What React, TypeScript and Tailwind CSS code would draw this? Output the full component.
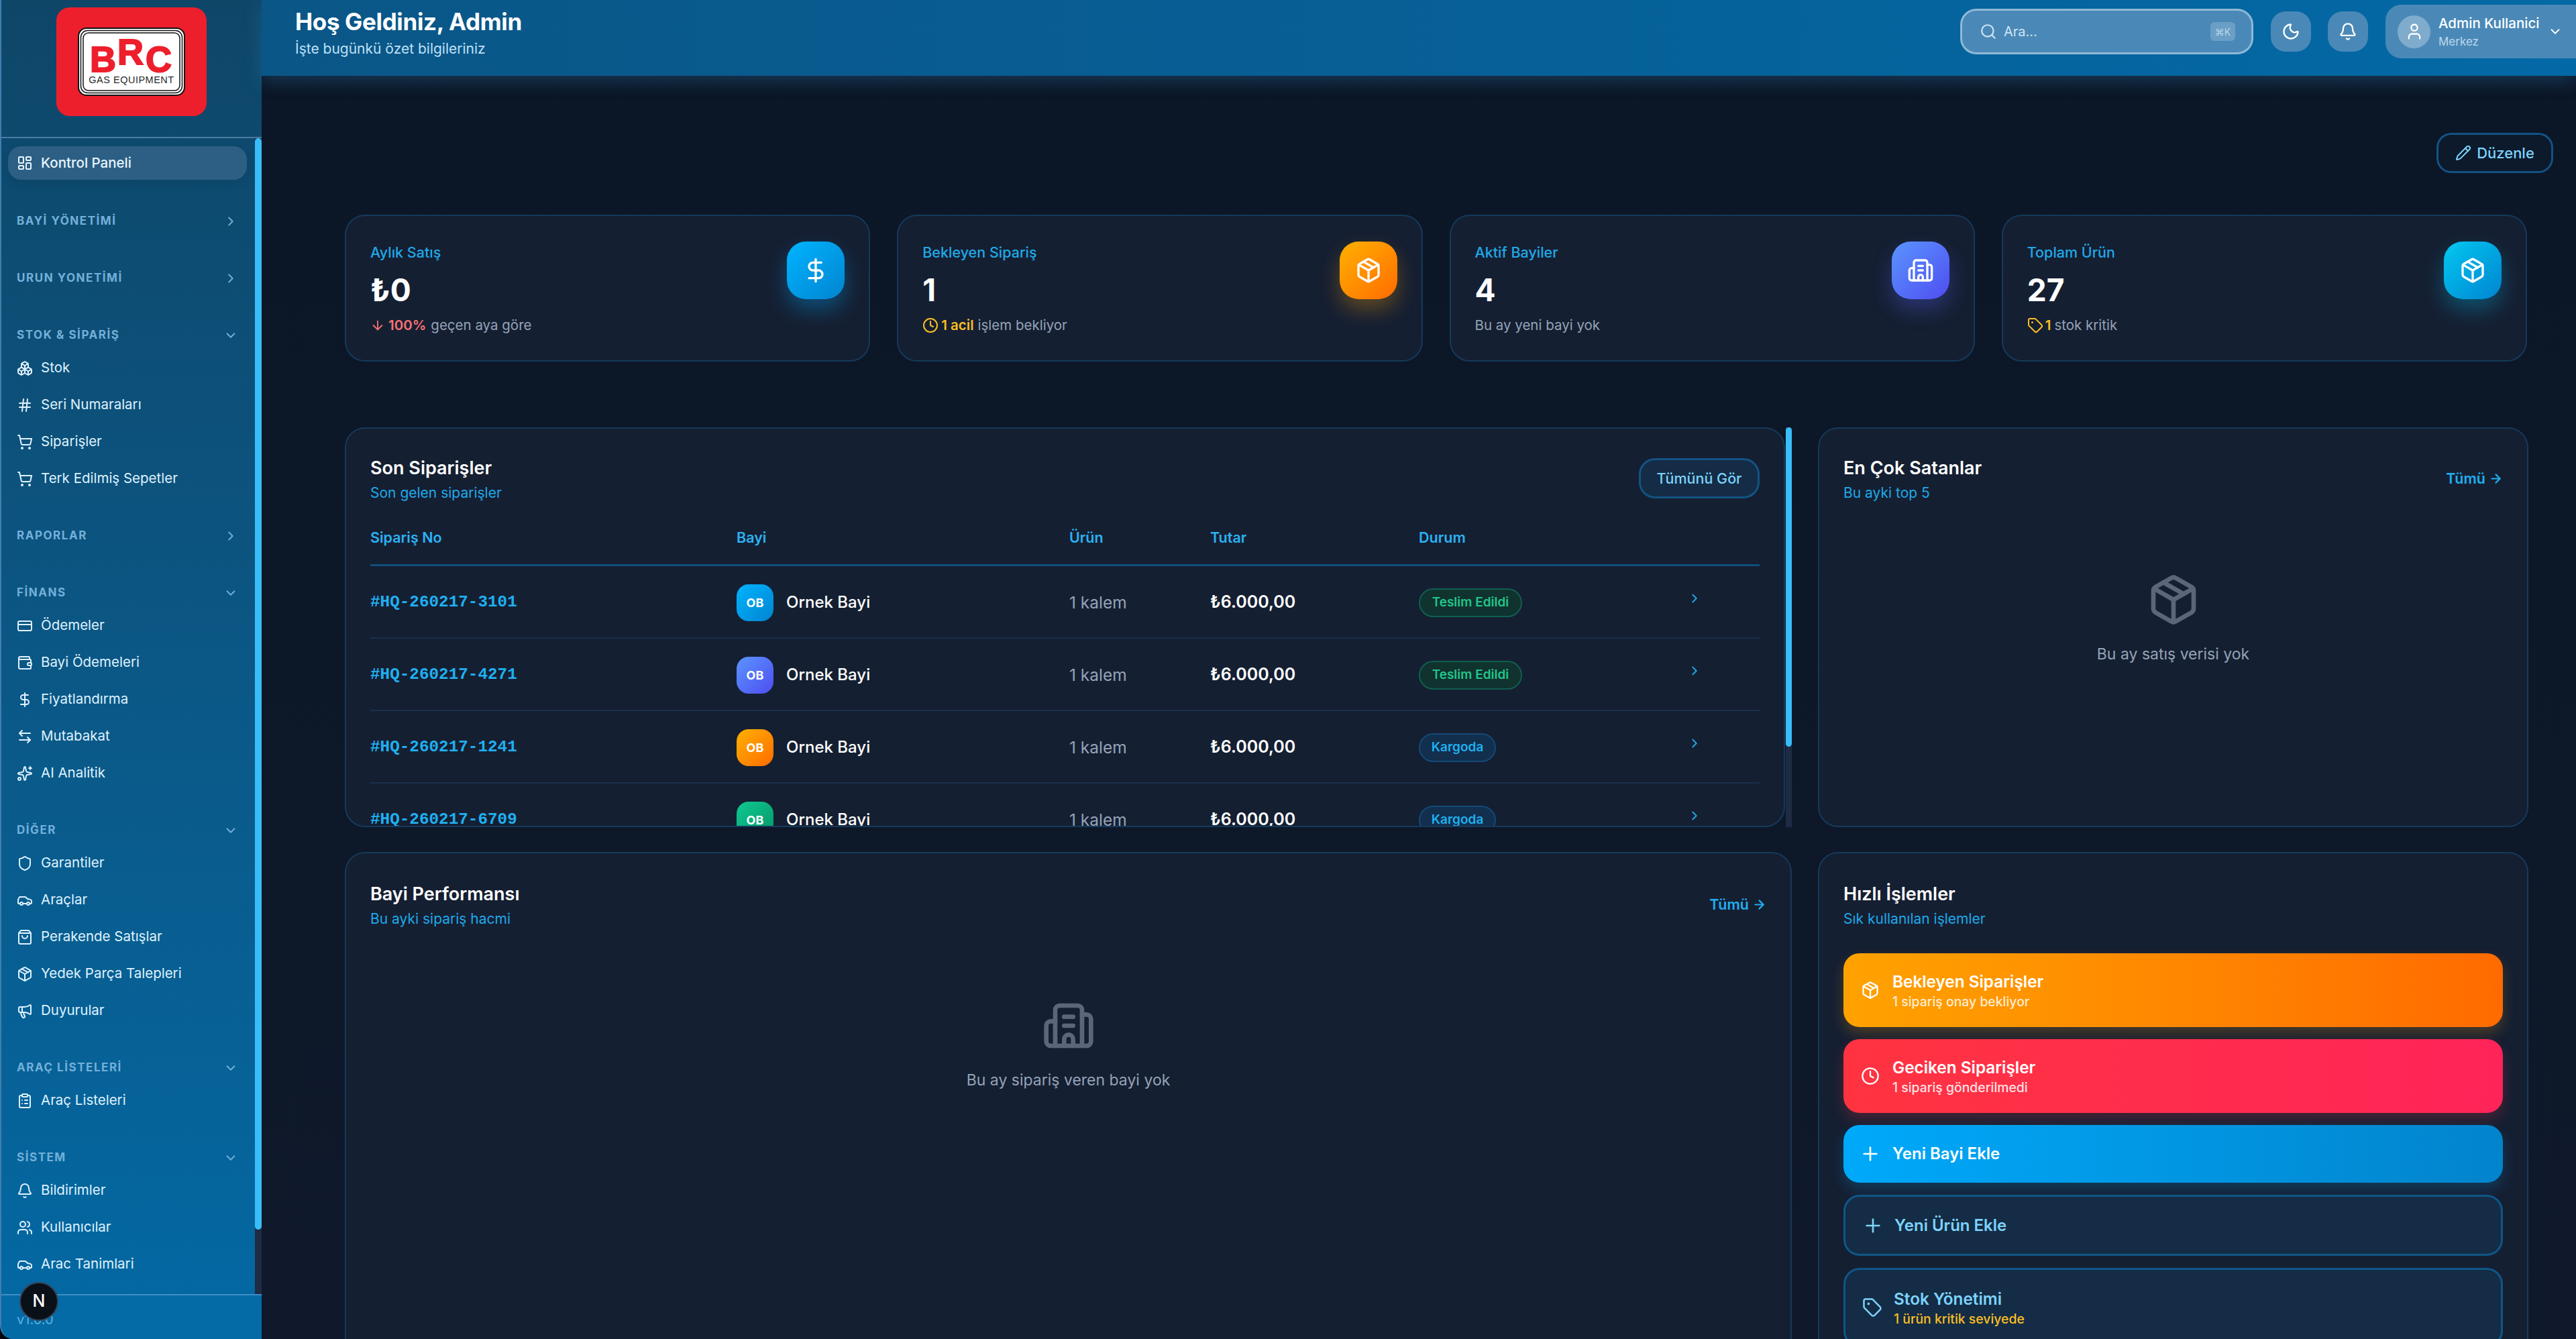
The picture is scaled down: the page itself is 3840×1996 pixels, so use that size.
import React from "react";
import {
  LayoutDashboard, Boxes, Hash, ShoppingCart, CreditCard, Wallet, DollarSign, ArrowLeftRight, Sparkles,
  Shield, Car, ShoppingBag, Package, Megaphone, ClipboardList, Bell, Users, ChevronRight, ChevronDown,
  Search, Moon, User, Pencil, Building2, Tag, Clock, ArrowDown, ArrowRight, Plus, Settings,
} from "lucide-react";

type Item = { label: string; icon: React.ElementType };
type Section = { title: string; open: boolean; items: Item[] };

const sections: Section[] = [
  { title: "BAYİ YÖNETİMİ", open: false, items: [] },
  { title: "URUN YONETİMİ", open: false, items: [] },
  {
    title: "STOK & SİPARİŞ", open: true,
    items: [
      { label: "Stok", icon: Boxes },
      { label: "Seri Numaraları", icon: Hash },
      { label: "Siparişler", icon: ShoppingCart },
      { label: "Terk Edilmiş Sepetler", icon: ShoppingCart },
    ],
  },
  { title: "RAPORLAR", open: false, items: [] },
  {
    title: "FİNANS", open: true,
    items: [
      { label: "Ödemeler", icon: CreditCard },
      { label: "Bayi Ödemeleri", icon: Wallet },
      { label: "Fiyatlandırma", icon: DollarSign },
      { label: "Mutabakat", icon: ArrowLeftRight },
      { label: "AI Analitik", icon: Sparkles },
    ],
  },
  {
    title: "DİĞER", open: true,
    items: [
      { label: "Garantiler", icon: Shield },
      { label: "Araçlar", icon: Car },
      { label: "Perakende Satışlar", icon: ShoppingBag },
      { label: "Yedek Parça Talepleri", icon: Package },
      { label: "Duyurular", icon: Megaphone },
    ],
  },
  { title: "ARAÇ LİSTELERİ", open: true, items: [{ label: "Araç Listeleri", icon: ClipboardList }] },
  {
    title: "SİSTEM", open: true,
    items: [
      { label: "Bildirimler", icon: Bell },
      { label: "Kullanıcılar", icon: Users },
      { label: "Arac Tanimlari", icon: Car },
      { label: "Ayarlar", icon: Settings },
    ],
  },
];

function Logo() {
  return (
    <div className="mx-auto mt-[11px] flex h-[162px] w-[224px] items-center justify-center rounded-[20px] bg-[#ee1f2d]">
      <svg width="160" height="102" viewBox="0 0 160 102">
        <rect x="1" y="1" width="158" height="100" rx="12" fill="#fff" stroke="#111" strokeWidth="2" />
        <rect x="4.5" y="4.5" width="151" height="93" rx="10" fill="#fff" stroke="#111" strokeWidth="1.5" />
        <rect x="8" y="8" width="144" height="86" rx="8" fill="#fff" stroke="#111" strokeWidth="1.5" />
        <text x="18" y="66" fontFamily="'Liberation Sans', sans-serif" fontWeight="700" fontSize="54" fill="#ee1f2d" stroke="#ee1f2d" strokeWidth="2">B</text>
        <text x="59" y="55" fontFamily="'Liberation Sans', sans-serif" fontWeight="700" fontSize="54" fill="#ee1f2d" stroke="#ee1f2d" strokeWidth="2">R</text>
        <text x="101" y="66" fontFamily="'Liberation Sans', sans-serif" fontWeight="700" fontSize="54" fill="#ee1f2d" stroke="#ee1f2d" strokeWidth="2">C</text>
        <text x="80" y="83" textAnchor="middle" fontFamily="'Liberation Sans', sans-serif" fontSize="14.5" letterSpacing="0.5" fill="#2a2a2a">GAS EQUIPMENT</text>
      </svg>
    </div>
  );
}

function Sidebar() {
  return (
    <aside className="relative flex h-full w-[390px] shrink-0 flex-col overflow-hidden rounded-bl-[20px] border-l-2 border-[#3f7fae] bg-gradient-to-b from-[#0e4668] to-[#0369a4]">
      <div className="h-[206px] shrink-0 border-b-2 border-[#4a7c9f]">
        <Logo />
      </div>
      <div className="flex min-h-0 flex-1">
        <nav className="min-w-0 flex-1 overflow-hidden pl-[10px] pr-[12px] pt-[12px]">
          <div className="flex h-[50px] items-center gap-[12px] rounded-[20px] bg-[#2d5f84] pl-[13px] text-[20.5px] font-medium text-[#e6f5ff] shadow-[0_6px_14px_rgba(0,0,0,0.08)]">
            <LayoutDashboard size={24} strokeWidth={2} className="shrink-0" />
            <span>Kontrol Paneli</span>
          </div>
          <div className="mt-[40px]">
            {sections.map((s) => (
              <div key={s.title} className={s.open ? "mb-[36px]" : "mb-[42px]"}>
                <div className="flex h-[43px] items-center justify-between pl-[13px] pr-[13px] text-[17px] font-bold tracking-[0.09em] text-[#74b0da]">
                  <span>{s.title}</span>
                  {s.open ? <ChevronDown size={22} strokeWidth={2} /> : <ChevronRight size={22} strokeWidth={2} />}
                </div>
                {s.items.map((it) => (
                  <div key={it.label} className="flex h-[55px] items-center gap-[12px] pl-[13px] text-[20.5px] text-[#dff2ff]">
                    <it.icon size={24} strokeWidth={2} className="shrink-0" />
                    <span className="whitespace-nowrap">{it.label}</span>
                  </div>
                ))}
              </div>
            ))}
          </div>
        </nav>
        <div className="h-full w-[10px] shrink-0 bg-[#1e2b42]">
          <div className="h-[1627px] w-full rounded-full bg-[#38bdf8]" />
        </div>
      </div>
      <div className="h-[67px] shrink-0 border-t-2 border-[#3e8fc4] bg-[#046ba6] pl-[23px] pt-[24px] text-[20px] leading-[24px] text-[#5db0e2]">
        v1.0.0
      </div>
      <div className="absolute left-[27px] top-[1911px] flex h-[58px] w-[58px] items-center justify-center rounded-full border-2 border-[#33445a] bg-[#0a1018] text-[25px] font-medium text-white">
        N
      </div>
    </aside>
  );
}

function Topbar() {
  return (
    <header className="relative z-10 flex h-[113px] shrink-0 bg-gradient-to-r from-[#0a5687] to-[#0369a6] shadow-[0_8px_26px_rgba(56,140,200,0.3)]">
      <div className="pl-[50px] pt-[11px]">
        <h1 className="text-[35px] font-bold leading-[42px] tracking-[-0.01em] text-white">Hoş Geldiniz, Admin</h1>
        <p className="mt-[6px] text-[21px] leading-[28px] text-[#bfe0f5]">İşte bugünkü özet bilgileriniz</p>
      </div>
      <div className="ml-auto flex h-[94px] items-center">
        <div className="flex h-[68px] w-[437px] items-center rounded-[24px] border-[3px] border-[#8fb8d6] bg-[#4a89b7] pl-[26px] pr-[24px] text-[20px] text-[#cfe4f3]">
          <Search size={26} strokeWidth={2} className="shrink-0" />
          <span className="ml-[10px]">Ara...</span>
          <span className="ml-auto flex h-[28px] w-[37px] items-center justify-center rounded-[6px] bg-[#6b9fc6] text-[14px] text-[#b9d6ea]">⌘K</span>
        </div>
        <div className="ml-[26px] flex h-[60px] w-[60px] items-center justify-center rounded-[22px] bg-[#4a89b7] text-white">
          <Moon size={28} strokeWidth={2} />
        </div>
        <div className="ml-[25px] flex h-[60px] w-[60px] items-center justify-center rounded-[22px] bg-[#4a89b7] text-white">
          <Bell size={28} strokeWidth={2} />
        </div>
        <div className="ml-[26px] flex h-[80px] w-[284px] items-center rounded-l-[24px] bg-[#4a89b7] pl-[18px]">
          <div className="flex h-[49px] w-[49px] items-center justify-center rounded-full bg-[#7fabcc] text-white">
            <User size={28} strokeWidth={2} />
          </div>
          <div className="ml-[12px]">
            <div className="text-[20.5px] font-medium leading-[28px] text-white">Admin Kullanici</div>
            <div className="mt-[1px] text-[17px] leading-[24px] text-[#bcd8ec]">Merkez</div>
          </div>
          <ChevronDown size={22} strokeWidth={2} className="ml-[13px] text-white" />
        </div>
      </div>
    </header>
  );
}

const stats = [
  { label: "Aylık Satış", value: "₺0", icon: DollarSign, grad: "bg-gradient-to-br from-[#00b4ff] to-[#0284d0] shadow-[0_16px_30px_rgba(0,160,240,0.35)]", kind: "a" },
  { label: "Bekleyen Sipariş", value: "1", icon: Package, grad: "bg-gradient-to-br from-[#ffb000] to-[#ff6a00] shadow-[0_16px_30px_rgba(255,160,0,0.3)]", kind: "b" },
  { label: "Aktif Bayiler", value: "4", icon: Building2, grad: "bg-gradient-to-br from-[#5b93ff] to-[#4f4bf0] shadow-[0_16px_30px_rgba(90,100,255,0.3)]", kind: "c" },
  { label: "Toplam Ürün", value: "27", icon: Package, grad: "bg-gradient-to-br from-[#08c8f0] to-[#0284d0] shadow-[0_16px_30px_rgba(0,190,240,0.3)]", kind: "d" },
];

function StatSub({ kind }: { kind: string }) {
  if (kind === "a")
    return (
      <>
        <ArrowDown size={22} strokeWidth={2} className="text-[#f87171]" />
        <span className="ml-[5px] font-semibold text-[#f87171]">100%</span>
        <span className="ml-[7px]">geçen aya göre</span>
      </>
    );
  if (kind === "b")
    return (
      <>
        <Clock size={24} strokeWidth={2} className="text-[#fbbf24]" />
        <span className="ml-[4px] font-semibold text-[#fbbf24]">1 acil</span>
        <span className="ml-[6px]">işlem bekliyor</span>
      </>
    );
  if (kind === "c") return <span>Bu ay yeni bayi yok</span>;
  return (
    <>
      <Tag size={24} strokeWidth={2} className="text-[#fbbf24]" />
      <span className="ml-[3px] font-semibold text-[#fbbf24]">1</span>
      <span className="ml-[5px]">stok kritik</span>
    </>
  );
}

const cardCls = "rounded-[30px] border-2 border-[#153a5a] bg-[#151f32]";

function StatCards() {
  return (
    <div className="mt-[62px] ml-[124px] mr-[73px] grid grid-cols-4 gap-[40px]">
      {stats.map((s) => (
        <div key={s.label} className={`${cardCls} flex h-[219px] justify-between pl-[36px] pr-[36px] pt-[36px]`}>
          <div>
            <div className="text-[21.5px] font-medium leading-[36px] text-[#1fa9e8]">{s.label}</div>
            <div className="mt-[12px] text-[46px] font-bold leading-[52px] text-white">{s.value}</div>
            <div className="mt-[11px] flex h-[32px] items-center text-[20.5px] text-[#94a3b8]">
              <StatSub kind={s.kind} />
            </div>
          </div>
          <div className={`${s.grad} mt-[2px] flex h-[86px] w-[86px] items-center justify-center rounded-[28px] text-white`}>
            <s.icon size={40} strokeWidth={2} />
          </div>
        </div>
      ))}
    </div>
  );
}

const orders = [
  { no: "#HQ-260217-3101", grad: "bg-gradient-to-br from-[#00b4ff] to-[#0284d0]", status: "Teslim Edildi" },
  { no: "#HQ-260217-4271", grad: "bg-gradient-to-br from-[#5b93ff] to-[#4f4bf0]", status: "Teslim Edildi" },
  { no: "#HQ-260217-1241", grad: "bg-gradient-to-br from-[#ffb000] to-[#ff6a00]", status: "Kargoda" },
  { no: "#HQ-260217-6709", grad: "bg-gradient-to-br from-[#10c990] to-[#059669]", status: "Kargoda" },
];

const tableCols = "grid grid-cols-[546px_496px_210px_311px_1fr]";

function CardHead({ title, sub, action }: { title: string; sub: string; action?: React.ReactNode }) {
  return (
    <div className="flex items-start justify-between">
      <div>
        <h2 className="text-[27px] font-semibold leading-[34px] text-white">{title}</h2>
        <p className="mt-[5px] text-[21px] leading-[30px] text-[#1fa9e8]">{sub}</p>
      </div>
      {action}
    </div>
  );
}

function TumuLink() {
  return (
    <div className="mt-[16px] flex h-[32px] items-center gap-[5px] text-[21.5px] font-semibold text-[#1fb0f0]">
      Tümü <ArrowRight size={21} strokeWidth={2.5} />
    </div>
  );
}

function OrdersCard() {
  return (
    <div className="flex h-[596px] min-w-0">
      <div className={`${cardCls} min-w-0 flex-1 overflow-hidden px-[36px] pt-[42px]`}>
        <div>
          <CardHead
            title="Son Siparişler"
            sub="Son gelen siparişler"
            action={
              <div className="mt-[2px] flex h-[60px] w-[180px] items-center justify-center rounded-[24px] border-[3px] border-[#135383] bg-[#142c45] text-[21.5px] font-medium text-[#7dd3fc]">
                Tümünü Gör
              </div>
            }
          />
          <div className={`${tableCols} mt-[12px] h-[82px] items-center border-b-[3px] border-[#0f4f7c] text-[21.5px] font-semibold text-[#2bb2f2]`}>
            <span>Sipariş No</span>
            <span>Bayi</span>
            <span>Ürün</span>
            <span>Tutar</span>
            <span>Durum</span>
          </div>
          {orders.map((o) => (
            <div key={o.no} className={`${tableCols} h-[108px] items-center border-b-2 border-[#17314c] pt-[2px]`}>
              <span className="font-['Liberation_Mono',monospace] text-[24.3px] font-bold text-[#1fb0f0]">{o.no}</span>
              <div className="flex items-center gap-[19px]">
                <div className={`${o.grad} flex h-[55px] w-[55px] items-center justify-center rounded-[18px] text-[18px] font-bold text-white`}>OB</div>
                <span className="text-[24px] font-medium text-white">Ornek Bayi</span>
              </div>
              <span className="text-[24.5px] text-[#94a3b8]">1 kalem</span>
              <span className="text-[25px] font-semibold text-white">₺6.000,00</span>
              <div className="flex items-center">
                {o.status === "Teslim Edildi" ? (
                  <span className="flex h-[43px] w-[154px] items-center justify-center rounded-full border-2 border-[#115e50] bg-[#10332f] text-[19px] font-semibold text-[#22c58b]">
                    Teslim Edildi
                  </span>
                ) : (
                  <span className="flex h-[43px] w-[115px] items-center justify-center rounded-full border-2 border-[#124a78] bg-[#122f4d] text-[19px] font-semibold text-[#1fb0f0]">
                    Kargoda
                  </span>
                )}
                <ChevronRight size={22} strokeWidth={2} className="mb-[12px] ml-auto mr-[86px] text-[#1fa9e8]" />
              </div>
            </div>
          ))}
        </div>
      </div>
      <div className="ml-px h-full w-[9px] shrink-0 bg-[#1e2b42]">
        <div className="h-[476px] w-full rounded-full bg-[#38bdf8]" />
      </div>
    </div>
  );
}

function Empty({ icon: Icon, text }: { icon: React.ElementType; text: string }) {
  return (
    <div className="flex flex-col items-center pt-[104px]">
      <Icon size={80} strokeWidth={2} className="text-[#5b6679]" />
      <p className="mt-[25px] text-[23px] leading-[32px] text-[#94a3b8]">{text}</p>
    </div>
  );
}

function QuickActions() {
  return (
    <div className="mt-[36px] flex flex-col gap-[18px]">
      <div className="flex h-[110px] items-center rounded-[24px] bg-gradient-to-r from-[#ffa200] to-[#ff6a00] pl-[26px] shadow-[0_10px_20px_rgba(255,160,0,0.22)]">
        <Package size={28} strokeWidth={2} className="text-white" />
        <div className="ml-[19px]">
          <div className="text-[24.3px] font-semibold leading-[32px] text-white">Bekleyen Siparişler</div>
          <div className="mt-[1px] text-[19.4px] font-medium leading-[26px] text-[#ffecd1]">1 sipariş onay bekliyor</div>
        </div>
      </div>
      <div className="flex h-[110px] items-center rounded-[24px] bg-gradient-to-r from-[#ff3340] to-[#ff2458] pl-[26px] shadow-[0_10px_20px_rgba(255,50,70,0.22)]">
        <Clock size={28} strokeWidth={2} className="text-white" />
        <div className="ml-[19px]">
          <div className="text-[24.3px] font-semibold leading-[32px] text-white">Geciken Siparişler</div>
          <div className="mt-[1px] text-[19.4px] font-medium leading-[26px] text-[#ffe1e4]">1 sipariş gönderilmedi</div>
        </div>
      </div>
      <div className="flex h-[86px] items-center rounded-[24px] bg-gradient-to-r from-[#00a9fa] to-[#0284cc] pl-[24px] shadow-[0_10px_20px_rgba(0,160,240,0.22)]">
        <Plus size={32} strokeWidth={2} className="text-white" />
        <span className="ml-[17px] text-[24px] font-semibold text-white">Yeni Bayi Ekle</span>
      </div>
      <div className="flex h-[91px] items-center rounded-[24px] border-[3px] border-[#0f5688] bg-[#142c45] pl-[25px]">
        <Plus size={32} strokeWidth={2} className="text-[#7dd3fc]" />
        <span className="ml-[16px] text-[24px] font-semibold text-[#7dd3fc]">Yeni Ürün Ekle</span>
      </div>
      <div className="flex h-[118px] items-center rounded-[24px] border-[3px] border-[#0f5688] bg-[#142c45] pl-[25px]">
        <Tag size={30} strokeWidth={2} className="text-[#7dd3fc]" />
        <div className="ml-[17px]">
          <div className="text-[24.3px] font-semibold leading-[32px] text-[#7dd3fc]">Stok Yönetimi</div>
          <div className="mt-[1px] text-[19.4px] font-medium leading-[26px] text-[#fbbf24]">1 ürün kritik seviyede</div>
        </div>
      </div>
    </div>
  );
}

export default function App() {
  return (
    <div className="flex h-[1996px] w-[3840px] overflow-hidden bg-[#05080f] font-['Inter',sans-serif]">
      <Sidebar />
      <div className="flex h-full min-w-0 flex-1 flex-col">
        <Topbar />
        <main className="min-h-0 flex-1 overflow-hidden bg-gradient-to-b from-[#0b1626] to-[#0f192b] pt-[85px]">
          <div className="flex justify-end pr-[34px]">
            <div className="flex h-[60px] w-[174px] items-center justify-center gap-[8px] rounded-[22px] border-[3px] border-[#135383] bg-[#0c1a2c] text-[22px] font-medium text-[#7dd3fc]">
              <Pencil size={24} strokeWidth={2} />
              Düzenle
            </div>
          </div>
          <StatCards />
          <div className="ml-[124px] mt-[98px] grid w-[3255px] grid-cols-[2157px_1059px] gap-x-[39px] gap-y-[37px]">
            <OrdersCard />
            <div className={`${cardCls} h-[596px] px-[36px] pt-[42px]`}>
              <CardHead title="En Çok Satanlar" sub="Bu ayki top 5" action={<TumuLink />} />
              <Empty icon={Package} text="Bu ay satış verisi yok" />
            </div>
            <div className={`${cardCls} h-[800px] px-[36px] pt-[44px]`}>
              <CardHead title="Bayi Performansı" sub="Bu ayki sipariş hacmi" action={<TumuLink />} />
              <Empty icon={Building2} text="Bu ay sipariş veren bayi yok" />
            </div>
            <div className={`${cardCls} h-[800px] px-[36px] pt-[44px]`}>
              <CardHead title="Hızlı İşlemler" sub="Sık kullanılan işlemler" />
              <QuickActions />
            </div>
          </div>
        </main>
      </div>
    </div>
  );
}
